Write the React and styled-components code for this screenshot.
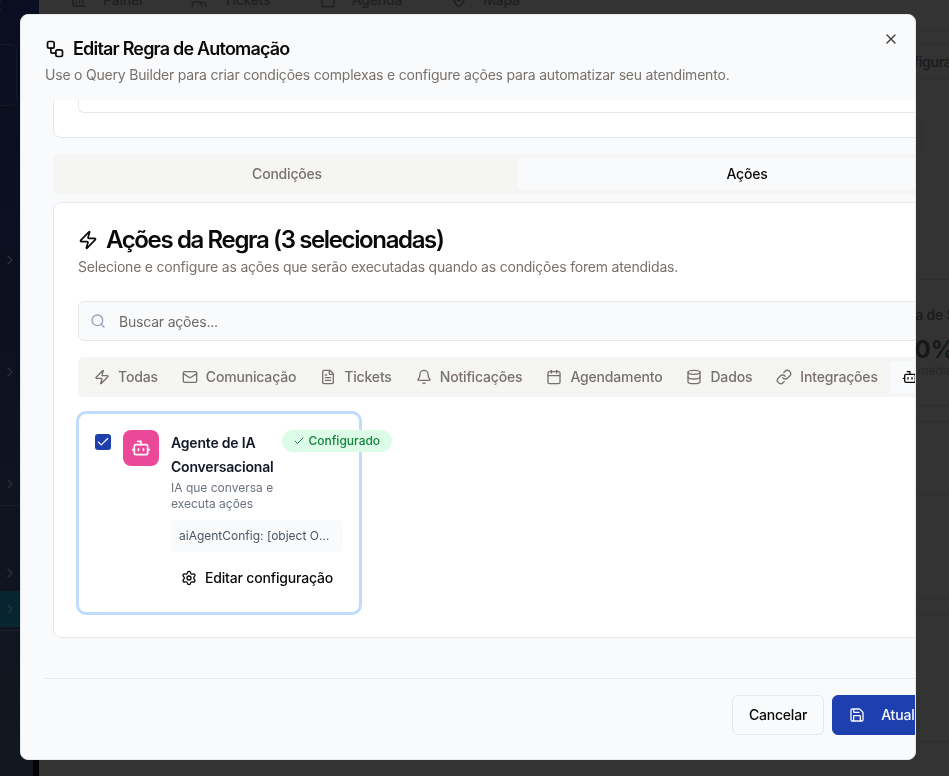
import React from "react";
import styled, { createGlobalStyle } from "styled-components";
import {
  BarChart3,
  Bell,
  Bot,
  Calendar,
  Check,
  ChevronLeft,
  ChevronRight,
  Database,
  FileText,
  Link,
  Mail,
  MapPin,
  Save,
  Search,
  Settings,
  Users,
  Workflow,
  X,
  Zap,
} from "lucide-react";

const GlobalStyle = createGlobalStyle`
  * {
    box-sizing: border-box;
  }
  html, body {
    margin: 0;
    height: 100%;
    overflow: hidden;
    background: #333333;
    font-family: Inter, "Liberation Sans", sans-serif;
  }
`;

const Page = styled.div`
  display: flex;
  width: 100vw;
  height: 100vh;
  overflow: hidden;
`;

const Sidebar = styled.aside`
  width: 39px;
  flex-shrink: 0;
  display: flex;
  flex-direction: column;
  background: linear-gradient(180deg, #0a0e20 0%, #0c1220 50%, #12181f 100%);
  color: #2c3036;
`;

const SideRow = styled.div`
  height: ${(props) => props.$height}px;
  flex-shrink: 0;
  padding: ${(props) => props.$top || 0}px 0 0 2px;
  background: ${(props) => (props.$active ? "#062530" : "transparent")};
  border-bottom: ${(props) => (props.$divider ? "1px solid #1b2027" : "none")};

  svg {
    display: block;
  }
`;

const BackChevron = styled(ChevronLeft)`
  margin: -3px 0 0 -12px;
`;

const SideBox = styled.div`
  width: 17px;
  height: 62px;
  margin-left: -2px;
  border: 1px solid #151a28;
  border-left: none;
  border-radius: 0 6px 6px 0;
`;

const SideFoot = styled.div`
  height: 16px;
  margin-top: auto;
  background: linear-gradient(90deg, #12181f 33px, #050505 33px);
`;

const Backdrop = styled.main`
  flex: 1;
  min-width: 0;
  display: flex;
  flex-direction: column;
  color: #1a1a1a;
  white-space: nowrap;
`;

const BackRow = styled.div`
  height: ${(props) => props.$height}px;
  flex-shrink: 0;
  border-bottom: 1px solid #2d2d2d;
`;

const BackNav = styled.nav`
  height: 31px;
  flex-shrink: 0;
  display: flex;
  align-items: flex-end;
  gap: 49px;
  padding: 0 0 20px 32px;
  overflow: hidden;
  font-size: 14px;
  font-weight: 500;
  line-height: 20px;
  letter-spacing: -0.2px;
  color: #1f1f1f;
  border-bottom: 1px solid #2d2d2d;
`;

const BackNavItem = styled.span`
  display: flex;
  align-items: center;
  gap: 16px;
`;

const BackAction = styled.div`
  height: 35px;
  flex-shrink: 0;
  padding-left: 848px;
  font-size: 14px;
  font-weight: 500;
  line-height: 35px;
  letter-spacing: -0.2px;
  border-bottom: 1px solid #2d2d2d;
`;

const BackFrame = styled.div`
  width: 40px;
  height: 36px;
  margin: 37px 0 0 882px;
  border-left: 1px solid #2f2f2f;
`;

const BackStat = styled.div`
  height: 126px;
  flex-shrink: 0;
  padding: 25px 0 0 849px;
  border-bottom: 1px solid #2d2d2d;
`;

const StatLabel = styled.div`
  padding-left: 4px;
  font-size: 14px;
  font-weight: 500;
  line-height: 20px;
  letter-spacing: -0.2px;
`;

const StatValue = styled.div`
  margin-top: 10px;
  font-size: 24px;
  font-weight: 700;
  line-height: 29px;
  color: #171717;
`;

const StatNote = styled.div`
  padding-left: 30px;
  font-size: 12px;
  line-height: 14px;
  color: #292929;
`;

const Modal = styled.section`
  position: fixed;
  top: 14px;
  left: 20px;
  width: 896px;
  height: 746px;
  overflow: hidden;
  background: #f9fafb;
  border: 1px solid #e5e7eb;
  border-radius: 8px;
`;

const ModalHeader = styled.header`
  padding: 24px 24px 15px;
`;

const ModalTitle = styled.h2`
  display: flex;
  align-items: center;
  gap: 8px;
  margin: 0;
  font-size: 18px;
  font-weight: 600;
  line-height: 20px;
  letter-spacing: -0.81px;
  color: #0c0a09;
`;

const ModalDescription = styled.p`
  margin: 6px 0 0;
  font-size: 14px;
  line-height: 20px;
  letter-spacing: -0.2px;
  color: #78716c;
`;

const CloseButton = styled.button`
  position: absolute;
  top: 16px;
  right: 16px;
  display: flex;
  padding: 0;
  border: none;
  background: none;
  color: #44403c;
`;

const Body = styled.div`
  width: 928px;
  margin-left: 32px;
`;

const ScrolledCard = styled.div`
  height: 38px;
  background: #fff;
  border: 1px solid #e5e7eb;
  border-top: none;
  border-radius: 0 0 8px 8px;
`;

const ScrolledInner = styled.div`
  height: 13px;
  margin: 0 24px;
  border: 1px solid #e5e7eb;
  border-top: none;
  border-radius: 0 0 6px 6px;
`;

const TabList = styled.div`
  display: grid;
  grid-template-columns: 1fr 1fr;
  height: 40px;
  margin-top: 16px;
  padding: 4px;
  background: #f5f5f4;
  border-radius: 6px;
`;

const Tab = styled.button`
  padding: 0;
  border: none;
  border-radius: 4px;
  font: 500 14px/20px Inter, sans-serif;
  letter-spacing: -0.2px;
  color: ${(props) => (props.$active ? "#0c0a09" : "#78716c")};
  background: ${(props) => (props.$active ? "#f9fafb" : "transparent")};
`;

const ActionsCard = styled.div`
  height: 436px;
  margin-top: 8px;
  padding: 24px;
  background: #fff;
  border: 1px solid #e5e7eb;
  border-radius: 8px;
`;

const ActionsTitle = styled.h3`
  display: flex;
  align-items: center;
  gap: 8px;
  margin: 0;
  padding-top: 1px;
  font-size: 24px;
  font-weight: 600;
  line-height: 24px;
  letter-spacing: -1.37px;
  color: #0c0a09;
`;

const ActionsSubtitle = styled.p`
  margin: 5px 0 24px;
  font-size: 14px;
  line-height: 20px;
  letter-spacing: -0.2px;
  color: #78716c;
`;

const SearchBox = styled.div`
  display: flex;
  align-items: center;
  gap: 13px;
  height: 40px;
  padding-left: 11px;
  font-size: 14px;
  letter-spacing: -0.2px;
  color: #6f6a66;
  background: #f9fafb;
  border: 1px solid #e5e7eb;
  border-radius: 6px;

  svg {
    color: #94a3b8;
  }
`;

const FilterList = styled.div`
  display: flex;
  height: 40px;
  margin-top: 16px;
  padding: 4px;
  overflow: hidden;
  background: #f5f5f4;
  border-radius: 6px;
`;

const FilterTab = styled.button`
  display: flex;
  flex-shrink: 0;
  align-items: center;
  gap: 8px;
  padding: 0 12px;
  border: none;
  border-radius: 4px;
  font: 500 14px/20px Inter, sans-serif;
  letter-spacing: -0.17px;
  color: ${(props) => (props.$active ? "#0c0a09" : "#78716c")};
  background: ${(props) => (props.$active ? "#f9fafb" : "transparent")};
`;

const ActionGrid = styled.div`
  display: grid;
  grid-template-columns: repeat(3, minmax(0, 1fr));
  gap: 16px;
  margin-top: 16px;
`;

const ActionItem = styled.article`
  display: flex;
  gap: 12px;
  height: 200px;
  padding: 16px;
  background: #fff;
  border: 1px solid #bfdbfe;
  border-radius: 8px;
  box-shadow: 0 0 0 2px #bfdbfe;
`;

const Checkbox = styled.span`
  display: flex;
  flex-shrink: 0;
  align-items: center;
  justify-content: center;
  width: 16px;
  height: 16px;
  margin-top: 4px;
  color: #fff;
  background: #1e40af;
  border-radius: 3px;
`;

const ActionIcon = styled.span`
  display: flex;
  flex-shrink: 0;
  align-items: center;
  justify-content: center;
  width: 36px;
  height: 36px;
  color: #fff;
  background: ${(props) => props.$color};
  border-radius: 8px;
`;

const ActionBody = styled.div`
  flex: 1;
  min-width: 0;
`;

const ActionHead = styled.div`
  display: flex;
  align-items: flex-start;
  gap: 8px;
`;

const ActionText = styled.div`
  width: min-content;
  padding-top: 1px;
`;

const ActionName = styled.h4`
  margin: 0;
  font-size: 14px;
  font-weight: 600;
  line-height: 24px;
  letter-spacing: -0.2px;
  color: #111827;
`;

const ActionNote = styled.p`
  margin: 1px 0 0;
  font-size: 12px;
  line-height: 16px;
  color: #6b7280;
`;

const Badge = styled.span`
  display: flex;
  flex-shrink: 0;
  align-items: center;
  gap: 4px;
  height: 22px;
  padding: 0 12px 1px 11px;
  font-size: 12px;
  font-weight: 500;
  white-space: nowrap;
  color: #15803d;
  background: #dcfce7;
  border-radius: 999px;
`;

const ConfigLine = styled.div`
  height: 32px;
  margin-top: 8px;
  padding: 0 8px;
  overflow: hidden;
  font-size: 12px;
  line-height: 32px;
  white-space: nowrap;
  text-overflow: ellipsis;
  color: #4b5563;
  background: #f9fafb;
  border-radius: 4px;
`;

const EditButton = styled.button`
  display: flex;
  align-items: center;
  justify-content: center;
  gap: 8px;
  width: 100%;
  height: 36px;
  margin-top: 8px;
  padding: 0;
  border: none;
  background: none;
  font: 500 14px/20px Inter, sans-serif;
  letter-spacing: -0.17px;
  color: #0c0a09;
`;

const Footer = styled.footer`
  display: flex;
  justify-content: flex-end;
  gap: 8px;
  width: 952px;
  margin: 40px 0 0 24px;
  padding-top: 16px;
  border-top: 1px solid #e5e7eb;
`;

const Button = styled.button`
  display: flex;
  flex-shrink: 0;
  align-items: center;
  gap: 16px;
  height: 40px;
  padding: 0 16px;
  font: 500 14px/20px Inter, sans-serif;
  letter-spacing: -0.2px;
  color: ${(props) => (props.$primary ? "#f9fafb" : "#0c0a09")};
  background: ${(props) => (props.$primary ? "#1e40af" : "#f9fafb")};
  border: 1px solid ${(props) => (props.$primary ? "#1e40af" : "#e5e7eb")};
  border-radius: 6px;
`;

const filters = [
  { label: "Todas", icon: Zap },
  { label: "Comunicação", icon: Mail },
  { label: "Tickets", icon: FileText },
  { label: "Notificações", icon: Bell },
  { label: "Agendamento", icon: Calendar },
  { label: "Dados", icon: Database },
  { label: "Integrações", icon: Link },
  { label: "IA", icon: Bot, active: true },
];

const navItems = [
  { label: "Painel", icon: BarChart3 },
  { label: "Tickets", icon: Users },
  { label: "Agenda", icon: Calendar },
  { label: "Mapa", icon: MapPin },
];

function App() {
  return (
    <>
      <GlobalStyle />
      <Page>
        <Sidebar>
          <SideRow $height={44}>
            <BackChevron size={16} />
          </SideRow>
          <SideRow $height={160}>
            <SideBox />
          </SideRow>
          <SideRow $height={112} $top={48}>
            <ChevronRight size={16} />
          </SideRow>
          <SideRow $height={112} $top={48}>
            <ChevronRight size={16} />
          </SideRow>
          <SideRow $height={78} $top={48} $divider>
            <ChevronRight size={16} />
          </SideRow>
          <SideRow $height={85} $top={59}>
            <ChevronRight size={16} />
          </SideRow>
          <SideRow $height={36} $top={10} $active>
            <ChevronRight size={16} />
          </SideRow>
          <SideRow $height={4} $divider />
          <SideFoot />
        </Sidebar>

        <Backdrop>
          <BackNav>
            {navItems.map(({ label, icon: Icon }) => (
              <BackNavItem key={label}>
                <Icon size={16} />
                {label}
              </BackNavItem>
            ))}
          </BackNav>
          <BackRow $height={13} />
          <BackAction>Configurar</BackAction>
          <BackRow $height={201}>
            <BackFrame />
          </BackRow>
          <BackStat>
            <StatLabel>Taxa de SLA</StatLabel>
            <StatValue>100%</StatValue>
            <StatNote>média</StatNote>
          </BackStat>
          <BackRow $height={16} />
          <BackRow $height={73} />
          <BackRow $height={104} />
          <BackRow $height={16} />
          <BackRow $height={127} />
        </Backdrop>
      </Page>

      <Modal role="dialog">
        <ModalHeader>
          <ModalTitle>
            <Workflow size={20} />
            Editar Regra de Automação
          </ModalTitle>
          <ModalDescription>
            Use o Query Builder para criar condições complexas e configure ações
            para automatizar seu atendimento.
          </ModalDescription>
        </ModalHeader>
        <CloseButton aria-label="Fechar">
          <X size={16} />
        </CloseButton>

        <Body>
          <ScrolledCard>
            <ScrolledInner />
          </ScrolledCard>

          <TabList>
            <Tab>Condições</Tab>
            <Tab $active>Ações</Tab>
          </TabList>

          <ActionsCard>
            <ActionsTitle>
              <Zap size={20} />
              Ações da Regra (3 selecionadas)
            </ActionsTitle>
            <ActionsSubtitle>
              Selecione e configure as ações que serão executadas quando as
              condições forem atendidas.
            </ActionsSubtitle>

            <SearchBox>
              <Search size={16} />
              Buscar ações...
            </SearchBox>

            <FilterList>
              {filters.map(({ label, icon: Icon, active }) => (
                <FilterTab key={label} $active={active}>
                  <Icon size={16} />
                  {label}
                </FilterTab>
              ))}
            </FilterList>

            <ActionGrid>
              <ActionItem>
                <Checkbox>
                  <Check size={14} />
                </Checkbox>
                <ActionIcon $color="#ec4899">
                  <Bot size={20} />
                </ActionIcon>
                <ActionBody>
                  <ActionHead>
                    <ActionText>
                      <ActionName>Agente de IA Conversacional</ActionName>
                      <ActionNote>IA que conversa e executa ações</ActionNote>
                    </ActionText>
                    <Badge>
                      <Check size={12} />
                      Configurado
                    </Badge>
                  </ActionHead>
                  <ConfigLine>aiAgentConfig: [object Object]</ConfigLine>
                  <EditButton>
                    <Settings size={16} />
                    Editar configuração
                  </EditButton>
                </ActionBody>
              </ActionItem>
            </ActionGrid>
          </ActionsCard>
        </Body>

        <Footer>
          <Button>Cancelar</Button>
          <Button $primary>
            <Save size={16} />
            Atualizar Regra
          </Button>
        </Footer>
      </Modal>
    </>
  );
}

export default App;
